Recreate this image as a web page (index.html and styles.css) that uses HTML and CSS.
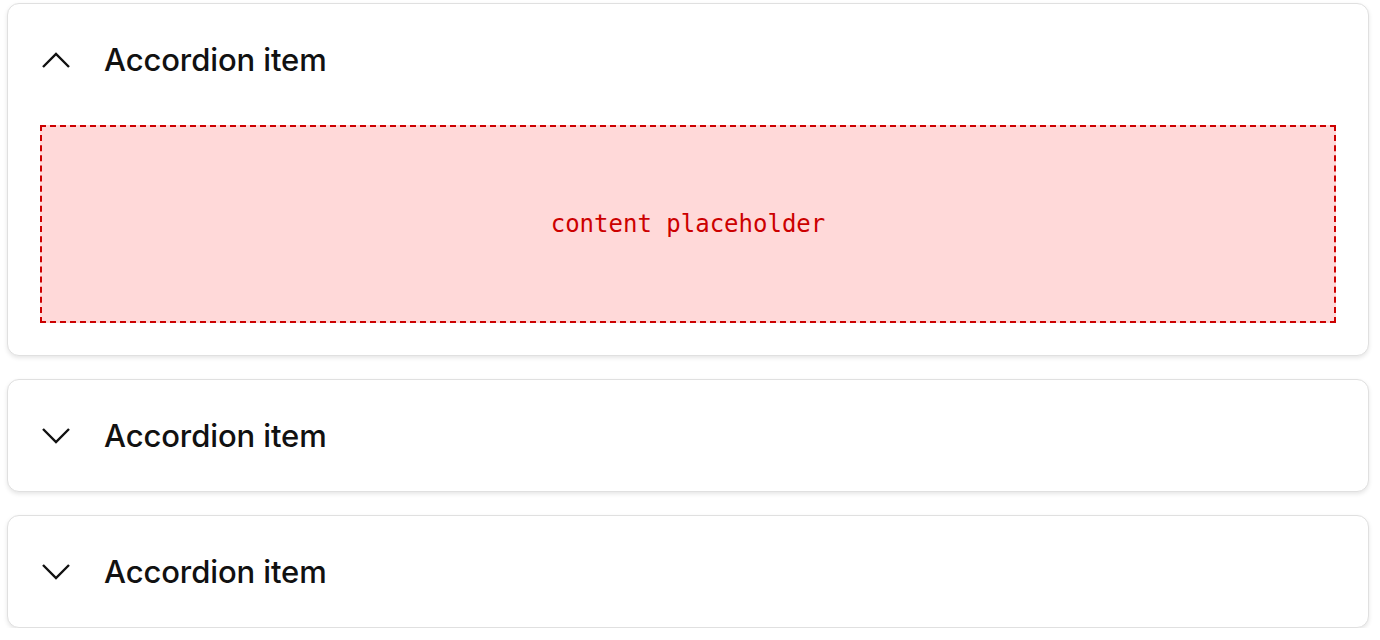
FILE: index.html
```html
<!DOCTYPE html>
<html lang="en">
<head>
<meta charset="utf-8">
<title>Accordion</title>
<link rel="stylesheet" href="styles.css">
</head>
<body>
<div class="accordion">
  <section class="item open">
    <div class="header">
      <svg class="chev" width="32" height="16" viewBox="0 0 32 16"><polyline points="3,15 16,2 29,15" fill="none" stroke="#111" stroke-width="2.4"/></svg>
      <span class="title">Accordion item</span>
    </div>
    <div class="placeholder">content placeholder</div>
  </section>
  <section class="item">
    <div class="header">
      <svg class="chev" width="32" height="16" viewBox="0 0 32 16"><polyline points="3,1 16,14 29,1" fill="none" stroke="#111" stroke-width="2.4"/></svg>
      <span class="title">Accordion item</span>
    </div>
  </section>
  <section class="item">
    <div class="header">
      <svg class="chev" width="32" height="16" viewBox="0 0 32 16"><polyline points="3,1 16,14 29,1" fill="none" stroke="#111" stroke-width="2.4"/></svg>
      <span class="title">Accordion item</span>
    </div>
  </section>
</div>
</body>
</html>
```
FILE: styles.css
```css
html, body {
  margin: 0;
  padding: 0;
  background: #fff;
}
body {
  padding: 3px 11px 0 7px;
  font-family: Inter, "Noto Sans", sans-serif;
  color: #111;
}
.accordion {
  display: flex;
  flex-direction: column;
  gap: 23px;
}
.item {
  border: 1px solid #e0e0e0;
  border-radius: 12px;
  box-shadow: 0 2px 4px rgba(0, 0, 0, 0.1);
  padding: 32px;
  background: #fff;
}
.header {
  display: flex;
  align-items: center;
  height: 47px;
  gap: 32px;
}
.chev {
  display: block;
  flex: none;
}
.title {
  font-size: 31px;
  font-weight: 500;
  letter-spacing: -0.1px;
}
.placeholder {
  margin-top: 42px;
  height: 194px;
  border: 2px dashed #cc0000;
  background: #ffd9d9;
  color: #cc0000;
  display: flex;
  align-items: center;
  justify-content: center;
  font-family: "DejaVu Sans Mono", "Liberation Mono", monospace;
  font-size: 24px;
}
```
